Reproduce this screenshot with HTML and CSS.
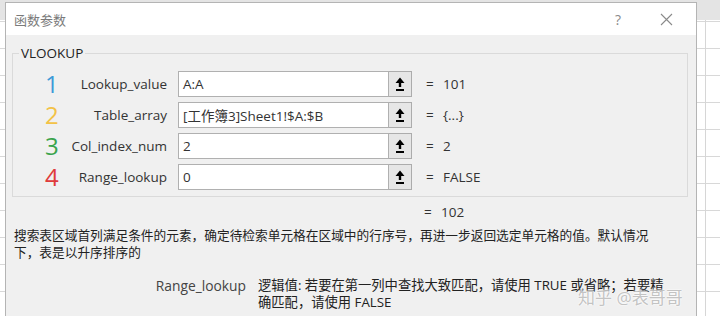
FILE: index.html
```html
<!DOCTYPE html>
<html lang="zh-CN">
<head>
    <meta charset="UTF-8">
    <title>函数参数</title>
    <link rel="stylesheet" href="styles.css">
</head>
<body>

    <div class="dialog">
        <div class="titlebar">
            <span class="title">函数参数</span>
            <span class="help">?</span>
            <svg class="close" width="13" height="13" viewBox="0 0 13 13">
                <path d="M1 1 L12 12 M12 1 L1 12" stroke="#8a8a8a" stroke-width="1.1" fill="none"/>
            </svg>
        </div>

        <div class="content">
            <fieldset class="args">
                <legend>VLOOKUP</legend>

                <div class="arg">
                    <span class="num n1">1</span>
                    <label class="name">Lookup_value</label>
                    <div class="field"><span class="val">A:A</span></div>
                    <button class="ref"><svg width="10" height="14" viewBox="0 0 10 14"><path d="M5 0.5 L9.5 6 H6.2 V10 H3.8 V6 H0.5 Z M1 12 H9 V14 H1 Z" fill="#000"/></svg></button>
                    <span class="eq">=</span>
                    <span class="res">101</span>
                </div>

                <div class="arg">
                    <span class="num n2">2</span>
                    <label class="name">Table_array</label>
                    <div class="field"><span class="val">[工作簿3]Sheet1!$A:$B</span></div>
                    <button class="ref"><svg width="10" height="14" viewBox="0 0 10 14"><path d="M5 0.5 L9.5 6 H6.2 V10 H3.8 V6 H0.5 Z M1 12 H9 V14 H1 Z" fill="#000"/></svg></button>
                    <span class="eq">=</span>
                    <span class="res">{...}</span>
                </div>

                <div class="arg">
                    <span class="num n3">3</span>
                    <label class="name">Col_index_num</label>
                    <div class="field"><span class="val">2</span></div>
                    <button class="ref"><svg width="10" height="14" viewBox="0 0 10 14"><path d="M5 0.5 L9.5 6 H6.2 V10 H3.8 V6 H0.5 Z M1 12 H9 V14 H1 Z" fill="#000"/></svg></button>
                    <span class="eq">=</span>
                    <span class="res">2</span>
                </div>

                <div class="arg">
                    <span class="num n4">4</span>
                    <label class="name">Range_lookup</label>
                    <div class="field"><span class="val">0</span></div>
                    <button class="ref"><svg width="10" height="14" viewBox="0 0 10 14"><path d="M5 0.5 L9.5 6 H6.2 V10 H3.8 V6 H0.5 Z M1 12 H9 V14 H1 Z" fill="#000"/></svg></button>
                    <span class="eq">=</span>
                    <span class="res">FALSE</span>
                </div>
            </fieldset>

            <div class="total">
                <span class="eq">=</span>
                <span class="res">102</span>
            </div>

            <p class="desc">
                <span class="line">搜索表区域首列满足条件的元素，确定待检索单元格在区域中的行序号，再进一步返回选定单元格的值。默认情况</span>
                <span class="line">下，表是以升序排序的</span>
            </p>

            <div class="help-row">
                <span class="help-name">Range_lookup</span>
                <p class="help-text">
                    <span class="line">逻辑值: 若要在第一列中查找大致匹配，请使用 TRUE 或省略；若要精</span>
                    <span class="line">确匹配，请使用 FALSE</span>
                </p>
                <span class="watermark">知乎 @表哥哥</span>
            </div>
        </div>
    </div>

</body>
</html>
```

FILE: styles.css
```css
body {
    margin: 0;
    width: 720px;
    height: 316px;
    overflow: hidden;
    font-family: "Open Sans", "Noto Sans CJK SC", sans-serif;
    color: #333;
    background:
        linear-gradient(#e4e4e4, #e4e4e4) 0 0 / 100% 20px no-repeat,
        linear-gradient(#d6d6d6, #d6d6d6) 705px 0 / 1px 100% no-repeat,
        repeating-linear-gradient(to bottom, transparent 0 21px, #d8d8d8 21px 22px, transparent 22px 27px) 0 0 / 100% 100%,
        #fff;
}

.dialog {
    margin: 2px 0 0 5px;
    width: 692px;
    height: 316px;
    box-sizing: border-box;
    border: 1px solid #b4b4b4;
    border-bottom: none;
    background: #f0f0f0;
    display: flex;
    flex-direction: column;
}

.titlebar {
    height: 32px;
    background: #fff;
    display: flex;
    align-items: center;
    padding-left: 8px;
}

.title {
    font-size: 13px;
    color: #7a7a7a;
    flex: 1;
}

.help {
    font-size: 14px;
    color: #8a8a8a;
    margin-right: 39px;
}

.close {
    margin-right: 23px;
}

.content {
    flex: 1;
    position: relative;
}

.args {
    margin: 9px 8px 0 6px;
    padding: 9px 0 6px 0;
    border: 1px solid #dadada;
}

.args legend {
    margin-left: 6px;
    padding: 0 2px;
    font-size: 13.5px;
    color: #222;
}

.arg {
    display: flex;
    align-items: center;
    height: 26px;
    margin-bottom: 5px;
}

.arg:last-child {
    margin-bottom: 0;
}

.num {
    width: 26px;
    margin-left: 32px;
    font-size: 24px;
    line-height: 26px;
    text-align: left;
}

.n1 { color: #3d9ad8; }
.n2 { color: #f3c247; }
.n3 { color: #3aa44c; }
.n4 { color: #df3b3b; }

.name {
    width: 96px;
    display: flex;
    justify-content: flex-end;
    white-space: nowrap;
    font-size: 13.5px;
    color: #333;
}

.field {
    margin-left: 11px;
    width: 211px;
    height: 26px;
    box-sizing: border-box;
    border: 1px solid #b0b0b0;
    background: #fff;
    display: flex;
    align-items: center;
    padding-left: 4px;
    font-size: 13.5px;
    white-space: nowrap;
    color: #333;
}

.ref {
    width: 23px;
    height: 26px;
    margin: 0;
    padding: 0;
    border: 1px solid #acacac;
    border-left: none;
    background: #e6e6e6;
    display: flex;
    align-items: center;
    justify-content: center;
}

.eq {
    margin-left: 14px;
    width: 17px;
    font-size: 13.5px;
}

.res {
    font-size: 13.5px;
}

.total {
    display: flex;
    align-items: center;
    height: 22px;
    margin-top: 4px;
    padding-left: 404px;
}

.desc {
    margin: 4px 0 0 8px;
    font-size: 12.7px;
    line-height: 17px;
    color: #222;
}

.line {
    display: block;
    white-space: nowrap;
}

.help-row {
    display: flex;
    margin-top: 16px;
    font-size: 13.3px;
    line-height: 17px;
    color: #333;
}

.help-name {
    width: 240px;
    display: flex;
    justify-content: flex-end;
    font-size: 13.8px;
    color: #444;
}

.help-text {
    margin: 0 0 0 12px;
    color: #222;
}

.watermark {
    position: absolute;
    left: 572px;
    bottom: 12px;
    font-size: 17px;
    color: rgba(170, 170, 170, 0.7);
    text-shadow: 0 0 2px #fff, 0 0 2px #fff;
    white-space: nowrap;
}
```
